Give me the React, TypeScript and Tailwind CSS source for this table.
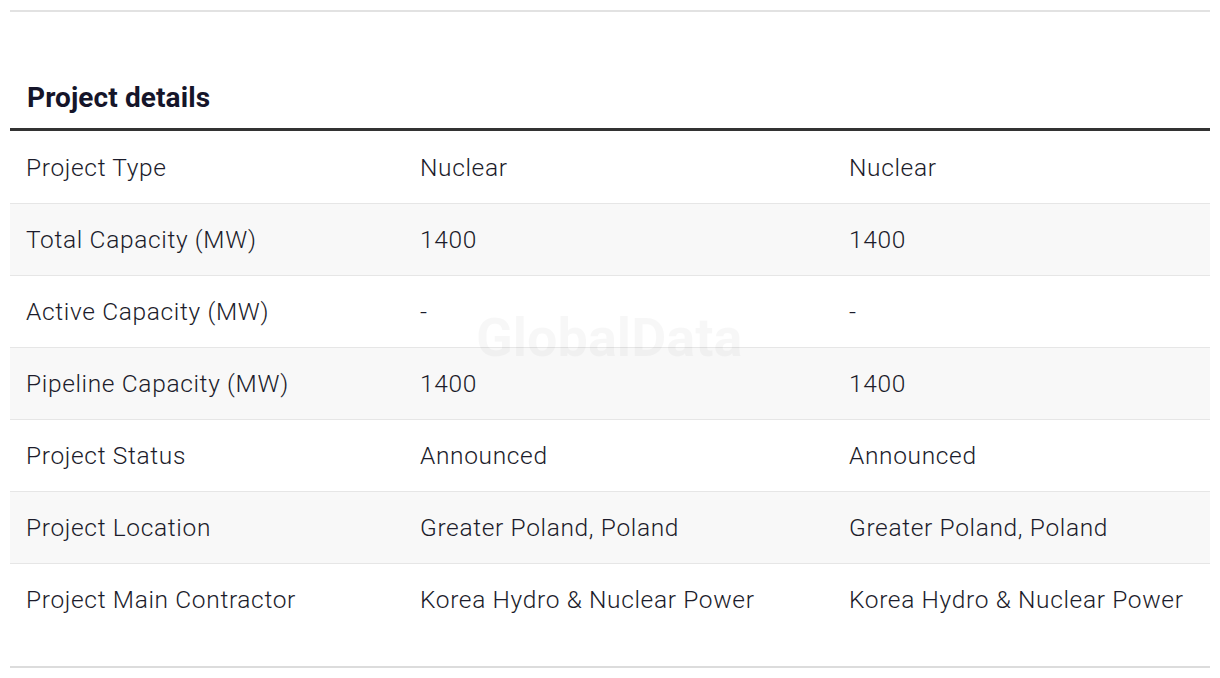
import React from "react";

const rows: [string, string, string][] = [
  ["Project Type", "Nuclear", "Nuclear"],
  ["Total Capacity (MW)", "1400", "1400"],
  ["Active Capacity (MW)", "-", "-"],
  ["Pipeline Capacity (MW)", "1400", "1400"],
  ["Project Status", "Announced", "Announced"],
  ["Project Location", "Greater Poland, Poland", "Greater Poland, Poland"],
  ["Project Main Contractor", "Korea Hydro & Nuclear Power", "Korea Hydro & Nuclear Power"],
];

export default function App() {
  return (
    <div className="w-[1220px] h-[678px] bg-white px-[10px] pt-[10px] text-[#1c1c2b]" style={{ fontFamily: "Roboto, 'Liberation Sans', sans-serif" }}>
      <div className="h-[2px] bg-[#e2e2e2]" />
      <h2 className="mt-[68px] pl-[17px] text-[28px] leading-[36px] font-bold tracking-[0.1px] text-[#15152a]">Project details</h2>
      <div className="relative mt-[12px] border-t-[3px] border-[#333333]">
        <div className="pointer-events-none absolute left-[466px] top-[177px] text-[54px] leading-[60px] font-bold text-black/[0.03]">GlobalData</div>
        <table className="w-full border-collapse">
          <colgroup>
            <col className="w-[394px]" />
            <col className="w-[429px]" />
            <col />
          </colgroup>
          <tbody>
            {rows.map((r, i) => (
              <tr key={i} className={`${i % 2 === 1 ? "bg-[#f8f8f8]" : "bg-white"} ${i < rows.length - 1 ? "border-b border-[#e6e6e6]" : ""}`}>
                {r.map((c, j) => (
                  <td key={j} className="h-[72px] pl-[16px] pt-[3px] text-[24.5px] font-light tracking-[0.65px] text-[#1c1c2b] align-middle">
                    {c}
                  </td>
                ))}
              </tr>
            ))}
          </tbody>
        </table>
        <div className="mt-[31px] h-[2px] bg-[#dcdcdc]" />
      </div>
    </div>
  );
}
